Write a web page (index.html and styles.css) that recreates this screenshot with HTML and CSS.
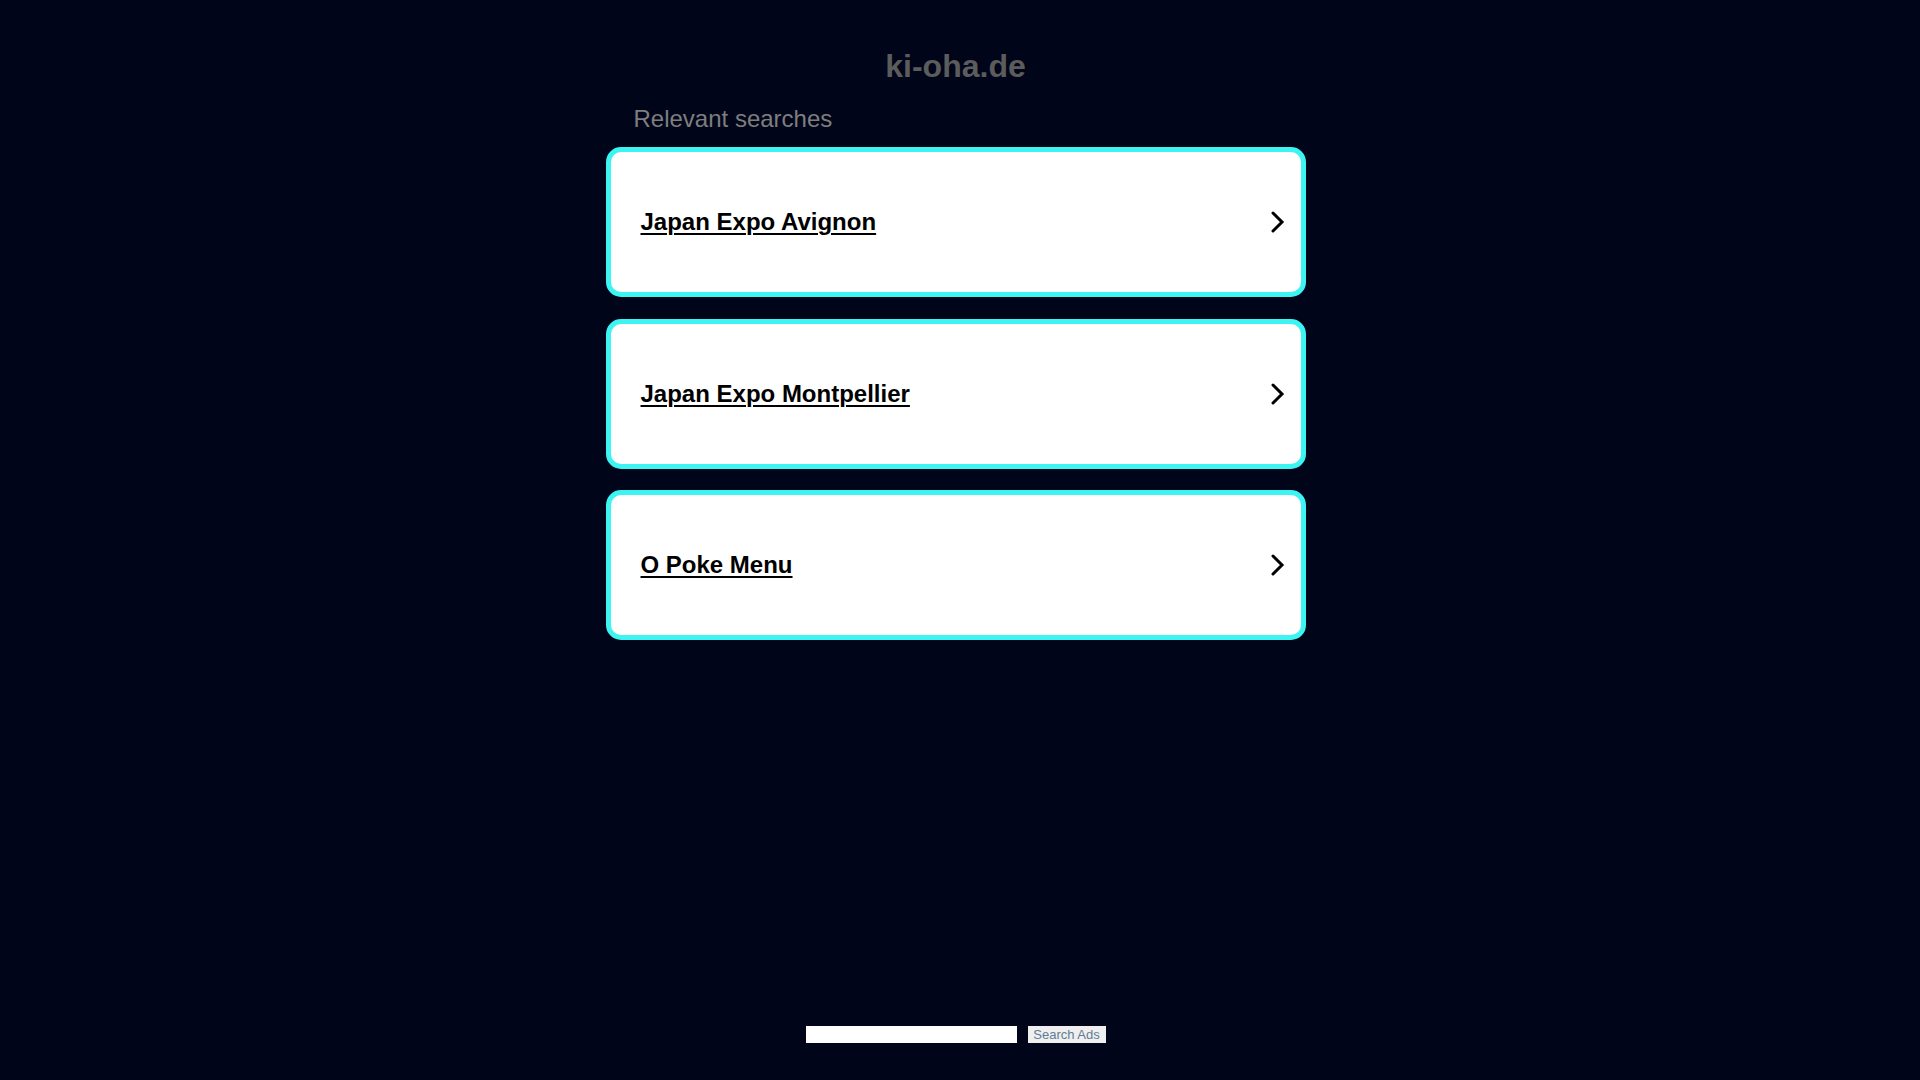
FILE: index.html
```html
<!DOCTYPE html>
<html lang="de">
<head>
  <meta charset="UTF-8">
  <meta name="viewport" content="width=device-width, initial-scale=1.0">
  <title>ki-oha.de</title>
  <link rel="stylesheet" href="styles.css">
</head>
<body>
  <div class="container">
    <h1 class="domain">ki-oha.de</h1>
    <div class="related">
      <p class="related-title">Relevant searches</p>
      <ul class="related-list">
        <li>
          <a href="#">
            <span>Japan Expo Avignon</span>
            <svg class="arrow" viewBox="0 0 14 22" width="14" height="22"><path d="M2 2 L11 11 L2 20"/></svg>
          </a>
        </li>
        <li>
          <a href="#">
            <span>Japan Expo Montpellier</span>
            <svg class="arrow" viewBox="0 0 14 22" width="14" height="22"><path d="M2 2 L11 11 L2 20"/></svg>
          </a>
        </li>
        <li>
          <a href="#">
            <span>O Poke Menu</span>
            <svg class="arrow" viewBox="0 0 14 22" width="14" height="22"><path d="M2 2 L11 11 L2 20"/></svg>
          </a>
        </li>
      </ul>
    </div>
  </div>

  <form class="search" onsubmit="return false;">
    <input type="text" name="search" aria-label="Search">
    <button type="submit">Search Ads</button>
  </form>

  <div class="footer"></div>
</body>
</html>
```

FILE: styles.css
```css
html::-webkit-scrollbar {
  width: 8px;
  background: #fff;
}

html::-webkit-scrollbar-thumb {
  background: #121212;
  border: 1px solid #fff;
  border-radius: 3px;
}

body {
  margin: 0;
  padding-right: 9px;
  background-color: #00051a;
  font-family: "Liberation Sans", Arial, sans-serif;
}

.container {
  width: 700px;
  margin: 0 auto;
  padding-top: 48px;
}

.domain {
  margin: 0;
  font-size: 32px;
  line-height: 36px;
  font-weight: bold;
  color: #5c5c5c;
  text-align: center;
}

.related-title {
  margin: 21px 0 15px 28px;
  font-size: 24px;
  line-height: 27px;
  color: #7e7e7e;
}

.related-list {
  list-style: none;
  margin: 0;
  padding: 0;
}

.related-list li {
  margin-bottom: 21.5px;
}

.related-list a {
  display: flex;
  align-items: center;
  justify-content: space-between;
  box-sizing: border-box;
  height: 150px;
  padding: 0 16px 0 30px;
  background: #fff;
  border: 5px solid #3cf5f2;
  border-radius: 15px;
  color: #000;
  font-size: 24px;
  font-weight: bold;
  text-decoration: none;
}

.related-list a span {
  text-decoration: underline;
  text-decoration-thickness: 2px;
  text-underline-offset: 3px;
}

.arrow path {
  fill: none;
  stroke: #000;
  stroke-width: 3;
  stroke-linecap: round;
  stroke-linejoin: miter;
}

.search {
  display: flex;
  justify-content: center;
  gap: 11px;
  margin-top: 386px;
}

.search input {
  width: 211px;
  height: 17px;
  padding: 0 4px;
  box-sizing: border-box;
  border: 0;
  background: #fff;
}

.search button {
  width: 78px;
  height: 17px;
  padding: 0;
  border: 0;
  background: #efefef;
  color: #5f7d95;
  font-family: "Liberation Sans", Arial, sans-serif;
  font-size: 13px;
  line-height: 17px;
}

.footer {
  height: 165px;
}
```
